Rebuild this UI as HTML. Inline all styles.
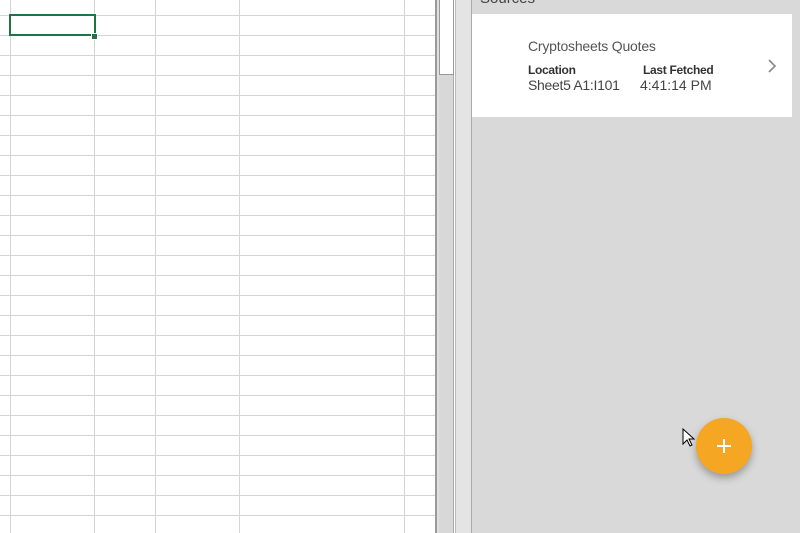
<!DOCTYPE html><html><head><style>
body{margin:0;width:800px;height:533px;overflow:hidden;position:relative;background:#fff;font-family:"Liberation Sans",sans-serif}
.grid{position:absolute;left:0;top:0;width:435px;height:533px;
background-image:linear-gradient(#d4d4d4 1px,transparent 1px);
background-size:100% 20px;background-position:0 15px}
.v{position:absolute;top:0;width:1px;height:533px;background:#d4d4d4}
</style></head><body>
<div class="grid"></div>
<div class="v" style="left:10px"></div><div class="v" style="left:94px"></div><div class="v" style="left:155px"></div><div class="v" style="left:239px"></div><div class="v" style="left:404px"></div>
<div style="position:absolute;left:9px;top:14px;width:83px;height:18px;border:2px solid #217346"></div>
<div style="position:absolute;left:91px;top:33px;width:5px;height:5px;background:#217346;border:1px solid #fff"></div>
<div style="position:absolute;left:435px;top:0;width:2px;height:533px;background:#9a9a9a"></div>
<div style="position:absolute;left:437px;top:0;width:17px;height:533px;background:#e0e0e0"></div>
<div style="position:absolute;left:439px;top:0;width:14px;height:533px;background:#d8d8d8;border-right:1px solid #aaa"></div>
<div style="position:absolute;left:439px;top:0;width:13px;height:74px;background:#fff;border:1px solid #999;border-top:none"></div>
<div style="position:absolute;left:455px;top:0;width:15px;height:533px;background:#e4e4e4;border-left:1px solid #bbb;border-right:1px solid #aaa"></div>
<div style="position:absolute;left:472px;top:0;width:328px;height:533px;background:#d9d9d9"></div>
<div style="position:absolute;left:480px;top:-10px;font-size:15px;color:#444">Sources</div>
<div style="position:absolute;left:472px;top:14px;width:320px;height:103px;background:#fff">
<div style="position:absolute;left:56px;top:24px;font-size:14px;color:#555;letter-spacing:-0.2px">Cryptosheets Quotes</div>
<div style="position:absolute;left:56px;top:49px;font-size:12px;font-weight:bold;color:#333;letter-spacing:-0.3px">Location</div>
<div style="position:absolute;left:171px;top:49px;font-size:12px;font-weight:bold;color:#333;letter-spacing:-0.3px">Last Fetched</div>
<div style="position:absolute;left:56px;top:63px;font-size:14px;color:#444;letter-spacing:-0.3px">Sheet5 A1:I101</div>
<div style="position:absolute;left:168px;top:63px;font-size:14px;color:#444">4:41:14 PM</div>
<svg style="position:absolute;left:295px;top:44px" width="10" height="16"><path d="M2 2l6 6-6 6" stroke="#888" stroke-width="1.6" fill="none"/></svg>
</div>
<div style="position:absolute;left:696px;top:418px;width:56px;height:56px;border-radius:50%;background:#f5a623;box-shadow:0 4px 8px rgba(0,0,0,.3)">
<div style="position:absolute;left:21px;top:27px;width:14px;height:2px;background:#fff"></div>
<div style="position:absolute;left:27px;top:21px;width:2px;height:14px;background:#fff"></div></div>
<svg style="position:absolute;left:682px;top:428px" width="14" height="20"><path d="M1 1v15l4-4 3 6 2-1-3-6h5z" fill="#fff" stroke="#000" stroke-width="1"/></svg>
</body></html>
